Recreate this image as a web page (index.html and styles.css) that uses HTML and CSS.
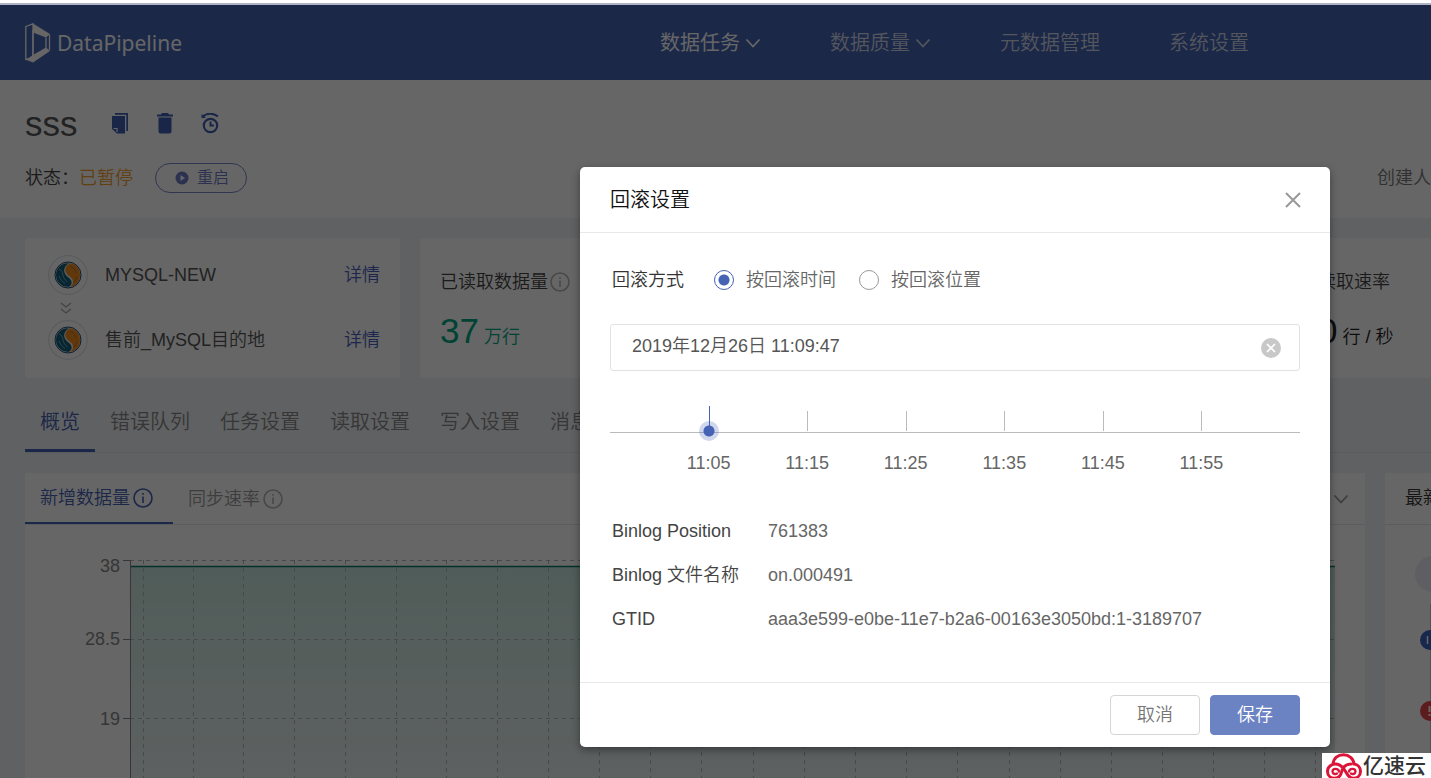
FILE: index.html
```html
<!DOCTYPE html>
<html lang="zh-CN">
<head>
<meta charset="utf-8">
<title>DataPipeline</title>
<link rel="stylesheet" href="styles.css">
</head>
<body>
<svg class="defs" aria-hidden="true">
  <symbol id="info" viewBox="0 0 20 20"><circle cx="10" cy="10" r="9" fill="none" stroke="currentColor" stroke-width="1.6"/><path d="M10 8.6V15M10 5v1.8" stroke="currentColor" stroke-width="1.6"/></symbol>
  <symbol id="chev" viewBox="0 0 16 16"><path d="M1.500 4.500 8 11.500 14.500 4.500" fill="none" stroke="currentColor" stroke-width="1.8"/></symbol>
  <symbol id="mysql" viewBox="0 0 40 40">
    <circle cx="20" cy="20" r="19.300" fill="none" stroke="#e2e4e8" stroke-width="1.200"/>
    <circle cx="20" cy="20" r="13" fill="#f4efe4" stroke="#1a4a78" stroke-width="1"/>
    <path d="M21 8.200C13 7.500 8 13.500 8 20S13 31.800 20.500 31.900C24 30.500 24.500 27 22.500 24.500 20.500 22 17 20.500 16.300 16.500 15.800 13 18 9.800 21 8.200Z" fill="#12607e"/>
    <path d="M22 8.300C28.500 9 32 14 32 20S28.500 30.800 22.500 31.800C25.500 29.500 25.500 26 23.800 23.600 21.800 21 18 19.500 17.400 16 17 12.800 19 9.800 22 8.300Z" fill="#f08c1e"/>
    <path d="M11 14c2.500 1 3.500 3 4 6s2 5 4.500 7M11 21c1 3 3 5.500 6 7.500" stroke="#7fb0c4" stroke-width=".9" fill="none"/>
    <path d="M22 11.500c3 .5 5.500 3 6 7M25.500 27.500c2-1.500 3-4 3.200-6.500" stroke="#b87020" stroke-width=".9" fill="none"/>
  </symbol>
</svg>
<div class="top-edge"></div>
<div class="app">
  <header class="header">
    <a class="brand" href="#">
      <svg width="26" height="40" viewBox="0 0 26 40" aria-hidden="true">
        <path d="M.8 3.500 8 .8V35L.8 36.500Z" fill="none" stroke="#fff" stroke-width="1.300"/>
        <path d="M8 .5 25 11 21 14.500 8 9.500Z" fill="#fff"/>
        <path d="M25 28 8 39.500.8 36.800 8 32 21 24.500Z" fill="#fff"/>
        <path d="M24.500 11.500V27M21 14.500V25M8 7v27" fill="none" stroke="#fff" stroke-width="1.300"/>
      </svg>
      <span>DataPipeline</span>
    </a>
    <nav class="nav">
      <a class="active" href="#">数据任务<svg width="16" height="16"><use href="#chev"/></svg></a>
      <a href="#">数据质量<svg width="16" height="16"><use href="#chev"/></svg></a>
      <a href="#">元数据管理</a>
      <a href="#">系统设置</a>
    </nav>
  </header>

  <section class="task-head">
    <div class="title-row">
      <h1>sss</h1>
      <button class="icon-btn" aria-label="复制"><svg width="18" height="22" viewBox="0 0 18 22"><path d="M4 0h13v18h-1.700V1.700H4Z" fill="currentColor"/><path d="M1 3h13v17.500H6L1 16Z" fill="currentColor"/><path d="M2.500 15.500H6v3.500" fill="none" stroke="#fff" stroke-width="1.200"/></svg></button>
      <button class="icon-btn" aria-label="删除"><svg width="18" height="22" viewBox="0 0 18 22"><path d="M1 1.500h4L6 0h6l1 1.500h4V3.500H1ZM2.500 4.500h13V18.500a2 2 0 0 1-2 2h-9a2 2 0 0 1-2-2Z" fill="currentColor"/></svg></button>
      <button class="icon-btn" aria-label="回滚"><svg width="18" height="22" viewBox="0 0 18 22"><circle cx="9.500" cy="12.500" r="6.700" fill="none" stroke="currentColor" stroke-width="2.200"/><path d="M9.500 8.500v4H13M1.500 4C5 0 12-.5 17 3.500" fill="none" stroke="currentColor" stroke-width="2"/><path d="M.5 1v4h4.500Z" fill="currentColor"/></svg></button>
    </div>
    <div class="status-row">
      <span>状态：</span><span class="paused">已暂停</span>
      <button class="restart"><svg width="14" height="14" viewBox="0 0 14 14"><circle cx="7" cy="7" r="6.500" fill="currentColor"/><path d="M5.500 4v6L10 7Z" fill="#fff"/></svg>重启</button>
      <span class="creator">创建人</span>
    </div>
  </section>

  <main class="main">
    <div class="cards">
      <section class="card route">
        <div class="endpoint"><svg width="40" height="40"><use href="#mysql"/></svg><span>MYSQL-NEW</span><a href="#">详情</a></div>
        <svg class="down" width="12" height="12" viewBox="0 0 12 12"><path d="M1 1l5 4 5-4M1 7l5 4 5-4" fill="none" stroke="currentColor" stroke-width="1.300"/></svg>
        <div class="endpoint"><svg width="40" height="40"><use href="#mysql"/></svg><span>售前_MySQL目的地</span><a href="#">详情</a></div>
      </section>
      <section class="card stat">
        <div class="stat-name">已读取数据量<svg class="faint" width="20" height="20"><use href="#info"/></svg></div>
        <div class="stat-value green"><b>37</b> 万行</div>
      </section>
      <section class="card stat">
        <div class="stat-name">读取速率</div>
        <div class="stat-value"><b>0</b> 行 / 秒</div>
      </section>
    </div>

    <nav class="tabs">
      <a class="active" href="#">概览</a><a href="#">错误队列</a><a href="#">任务设置</a><a href="#">读取设置</a><a href="#">写入设置</a><a href="#">消息</a>
    </nav>

    <div class="panels">
      <section class="panel">
        <div class="panel-head">
          <a class="active" href="#">新增数据量<svg width="20" height="20"><use href="#info"/></svg></a>
          <a href="#">同步速率<svg class="faint" width="20" height="20"><use href="#info"/></svg></a>
          <svg class="more" width="16" height="16"><use href="#chev"/></svg>
        </div>
        <svg class="chart" width="1340" height="253" viewBox="0 0 1340 253">
          <defs><linearGradient id="area" x1="0" y1="0" x2="0" y2="1"><stop offset="0" stop-color="#c9e7df"/><stop offset="1" stop-color="#f0f4f5"/></linearGradient></defs>
          <rect x="105" y="41" width="1205" height="260" fill="url(#area)"/>
          <path class="grid" d="M105 35.500H1310M105 114.500H1310M105 193.500H1310M118.500 35V253M168.500 35V253M218.500 35V253M269.500 35V253M320.500 35V253M371.500 35V253M421.500 35V253M472.500 35V253M523.500 35V253M574.500 35V253M625.500 35V253M676.500 35V253M728.500 35V253M779.500 35V253M830.500 35V253M881.500 35V253M932.500 35V253M984.500 35V253M1035.500 35V253M1086.500 35V253M1137.500 35V253M1188.500 35V253M1239.500 35V253M1290.500 35V253"/>
          <path d="M105 41.500H1310" stroke="#0b7d6d" stroke-width="1.500"/>
          <path class="axis" d="M105.500 253V35.500H98M98 114.500H105M98 193.500H105"/>
          <text x="95" y="47">38</text><text x="95" y="120">28.5</text><text x="95" y="200">19</text>
        </svg>
      </section>
      <section class="panel side">
        <div class="panel-head"><h2>最新</h2></div>
        <svg class="feed" width="46" height="253" viewBox="0 0 46 253">
          <path d="M45.500 79V253" stroke="#ccc"/>
          <circle cx="48" cy="49" r="18" fill="#eeeef8"/>
          <circle cx="45" cy="115" r="10" fill="#3d65bd"/><path d="M42.500 111v8" stroke="#fff" stroke-width="1.500"/>
          <circle cx="45" cy="186" r="10" fill="#e5484d"/><path d="M44.500 181v6m0 2v2" stroke="#fff" stroke-width="2"/>
        </svg>
      </section>
    </div>
  </main>

  <div class="mask">
    <div class="modal" role="dialog" aria-labelledby="dlg">
      <div class="modal-head">
        <h2 id="dlg">回滚设置</h2>
        <button class="close" aria-label="关闭"><svg width="16" height="16" viewBox="0 0 16 16"><path d="M1 1l14 14M15 1 1 15" stroke="currentColor" stroke-width="2"/></svg></button>
      </div>
      <div class="modal-body">
        <div class="mode">
          <span class="mode-name">回滚方式</span>
          <label><input type="radio" name="mode" checked>按回滚时间</label>
          <label><input type="radio" name="mode">按回滚位置</label>
        </div>
        <div class="date">
          <input type="text" value="2019年12月26日 11:09:47" aria-label="回滚时间">
          <button aria-label="清除"><svg width="20" height="20" viewBox="0 0 20 20"><circle cx="10" cy="10" r="10" fill="#c8c8c8"/><path d="M6 6l8 8M14 6l-8 8" stroke="#fff" stroke-width="1.700"/></svg></button>
        </div>
        <div class="timeline">
          <button class="on">11:05</button><button>11:15</button><button>11:25</button><button>11:35</button><button>11:45</button><button>11:55</button>
        </div>
        <dl class="details">
          <dt>Binlog Position</dt><dd>761383</dd>
          <dt>Binlog 文件名称</dt><dd>on.000491</dd>
          <dt>GTID</dt><dd>aaa3e599-e0be-11e7-b2a6-00163e3050bd:1-3189707</dd>
        </dl>
      </div>
      <div class="modal-foot">
        <button class="btn">取消</button>
        <button class="btn primary">保存</button>
      </div>
    </div>
  </div>
  <div class="watermark">
    <svg width="36" height="28" viewBox="0 0 36 28" aria-hidden="true"><g fill="none" stroke="#dc1437" stroke-width="3" stroke-linecap="round"><path d="M7 11.500C7.500 5 12 1.800 17.500 1.800S27.500 5.500 28 11c4 .5 6.500 3.500 6.500 7.200 0 4-3 7-7.200 7-7.800 0-6.800-12-15.800-14-5-1-10 2-10 7 0 4 3 7 7.200 7 7.300 0 6.300-7.400 8.300-10.200 2-2.500 4.500-4 8-4"/><path d="M13 18.500c-.5-3.500-6.500-3.500-6.500 0 0 2.500 3 3 4.500 2M23 18.500c.5-3.500 6.500-3.500 6.500 0 0 2.500-3 3-4.500 2" stroke-width="2.300"/></g></svg>
    <span>亿速云</span>
  </div>
</div>
</body>
</html>
```
FILE: styles.css
```css
* { box-sizing: border-box; }
body {
  margin: 0;
  height: 100vh;
  display: flex;
  flex-direction: column;
  overflow: hidden;
  font: 350 18px/24px "Liberation Sans", "Noto Sans CJK SC", sans-serif;
  color: #555;
  background: #fff;
}
h1, h2, dl, dd { margin: 0; font-weight: inherit; }
a { color: inherit; text-decoration: none; }
button { font: inherit; color: inherit; background: none; border: 0; padding: 0; }
svg { display: block; flex: none; }
.defs { position: absolute; width: 0; height: 0; }
.top-edge { flex: none; height: 5px; border-bottom: 2px solid #b0b3c5; }
.app { position: relative; flex: 1; min-height: 0; overflow: hidden; background: #f0f2f5; }

.header {
  height: 75px;
  padding: 0 182px 0 25px;
  display: flex;
  align-items: center;
  justify-content: space-between;
  background: #4565b5;
  color: #fff;
}
.brand { display: flex; align-items: center; gap: 6px; font: 21px/28px "Noto Sans", sans-serif; }
.nav { display: flex; gap: 69px; font-size: 20px; color: #d0d6e8; }
.nav a { display: flex; align-items: center; gap: 5px; white-space: nowrap; }
.nav .active { color: #fff; font-weight: 400; }

.task-head { height: 138px; padding-left: 25px; background: #fff; }
.title-row { display: flex; align-items: center; gap: 27px; padding-top: 24px; height: 64px; color: #3f5fb5; }
h1 { font-size: 35px; line-height: 40px; color: #555; margin-right: 6px; }
.status-row { display: flex; align-items: center; height: 68px; color: #444; }
.paused { color: #f5a030; }
.restart {
  display: flex; align-items: center; justify-content: center; gap: 8px;
  width: 92px; height: 30px; margin-left: 22px; padding-left: 2px;
  border: 1px solid #7a88c8; border-radius: 15px;
  font-size: 16px; color: #6c7cc4;
}
.creator { margin-left: auto; color: #777; }

.main { padding: 20px 0 0 25px; }
.cards { display: grid; grid-template-columns: 375px 1fr 133px; gap: 20px; height: 140px; }
.card { background: #fff; border-radius: 3px; white-space: nowrap; }
.route { display: flex; flex-direction: column; padding: 17px 20px 0 23px; color: #555; }
.endpoint { display: flex; align-items: center; gap: 17px; }
.endpoint a { margin-left: auto; color: #4a5fc0; }
.down { margin: 7px 0 6px 12px; color: #aaa; }
.stat { padding: 29px 20px 0; }
.stat-name { display: flex; align-items: center; gap: 2px; height: 30px; color: #444; }
.stat-value { padding-top: 14px; color: #222; line-height: 40px; }
.stat-value b { font-size: 35px; font-weight: inherit; }
.stat-value.green { color: #00a884; }
.faint { color: #b5b5b5; }

.tabs { display: flex; height: 75px; padding-top: 12px; border-bottom: 1px solid #e2e4ea; font-size: 20px; color: #888; }
.tabs a { padding: 20px 15px 0; border-bottom: 3px solid transparent; }
.tabs .active { color: #4562b5; border-color: #4562b5; }

.panels { display: grid; grid-template-columns: minmax(0, 1fr) 46px; gap: 20px; margin-top: 20px; }
.panel { background: #fff; overflow: hidden; }
.panel-head { display: flex; height: 52px; border-bottom: 1px solid #e6e6ea; color: #999; white-space: nowrap; }
.panel-head a { display: flex; align-items: center; gap: 3px; padding: 0 15px; }
.panel-head .active { padding-right: 20px; color: #4562b5; border-bottom: 2px solid #4562b5; }
.panel-head .more { align-self: center; margin: 0 16px 0 auto; }
.side h2 { padding: 13px 0 0 20px; font-size: 18px; color: #333; }
.grid { fill: none; stroke: #b0b8b6; stroke-dasharray: 4 4; }
.axis { fill: none; stroke: #888; stroke-width: 1; }
.chart text { font-size: 18px; text-anchor: end; fill: #888; }

.mask {
  position: absolute; inset: 0;
  display: flex; justify-content: flex-end; align-items: flex-start;
  padding: 162px 101px 0 0;
  background: rgba(0, 0, 0, .6);
}
.modal { width: 750px; background: #fff; border-radius: 5px; box-shadow: 0 3px 8px rgba(0, 0, 0, .4); }
.modal-head { display: flex; align-items: center; justify-content: space-between; height: 66px; padding: 0 29px 0 30px; border-bottom: 1px solid #e8e8e8; }
.modal-head h2 { font-size: 20px; color: #111; }
.close { color: #999; }
.modal-body { height: 449px; padding: 35px 30px 0; }
.mode { display: flex; align-items: center; height: 24px; padding-left: 2px; color: #666; }
.mode-name { color: #333; margin-right: 30px; }
.mode label { display: flex; align-items: center; gap: 12px; margin-right: 23px; }
.mode input { appearance: none; width: 20px; height: 20px; margin: 0; border: 1px solid #999; border-radius: 50%; }
.mode input:checked { border-color: #4562b5; background: radial-gradient(circle, #4562b5 5px, #fff 6px); }
.date { display: flex; align-items: center; height: 47px; margin-top: 32px; padding: 0 18px 0 21px; border: 1px solid #e2e2e2; border-radius: 3px; }
.date input { flex: 1; border: 0; outline: 0; padding: 0 0 4px; font: inherit; color: #555; background: none; }
.timeline { display: flex; position: relative; height: 105px; margin-top: 35px; padding: 0 calc(100% / 14); }
.timeline::before { content: ""; position: absolute; left: 0; right: 0; top: 26px; border-top: 1px solid #bbb; }
.timeline button { position: relative; flex: 1; height: 69px; padding-top: 45px; color: #666; }
.timeline button::before { content: ""; position: absolute; left: 50%; top: 5px; width: 1px; height: 20px; background: #bbb; }
.timeline button.on::before { top: 0; background: #4562b5; }
.timeline .on::after { content: ""; position: absolute; left: calc(50% - 10px); top: 15px; width: 20px; height: 20px; border-radius: 50%; background: radial-gradient(circle, #4562b5 5px, rgba(69, 98, 181, .25) 6px); }
.details { display: grid; grid-template-columns: 156px 1fr; row-gap: 20px; margin-top: 8px; padding-left: 2px; }
.details dt { color: #444; }
.details dd { color: #666; }
.modal-foot { display: flex; justify-content: flex-end; gap: 10px; padding: 12px 30px; border-top: 1px solid #e8e8e8; }
.btn { width: 90px; height: 40px; border: 1px solid #d5d5d5; border-radius: 4px; color: #777; }
.btn.primary { border-color: #6c83c3; background: #6c83c3; color: #fff; }

.watermark {
  position: absolute; right: 0; bottom: 0;
  display: flex; gap: 1px; width: 109px; height: 25px; padding-left: 4px; overflow: hidden;
  background: #fff; color: #333;
  font-size: 21px; font-weight: 500; line-height: 26px; white-space: nowrap;
}
```
